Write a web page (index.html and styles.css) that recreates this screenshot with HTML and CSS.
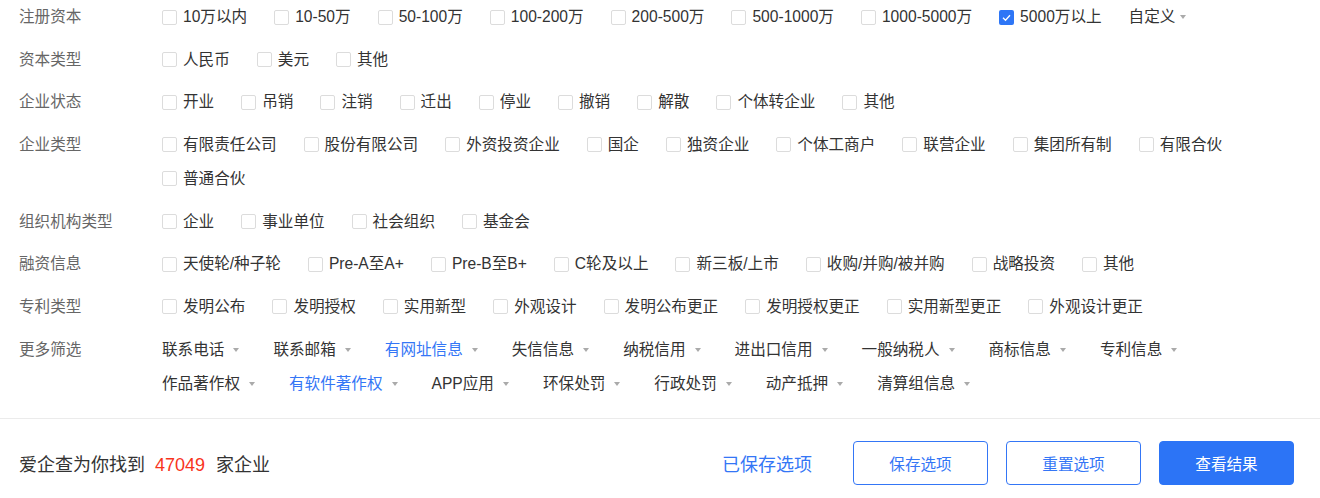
FILE: index.html
```html
<!DOCTYPE html>
<html lang="zh-CN">
<head>
    <meta charset="UTF-8">
    <meta name="viewport" content="width=device-width, initial-scale=1.0">
    <title>高级筛选</title>
    <link rel="stylesheet" href="styles.css">
</head>
<body>

    <div class="filter-panel">
        <div class="filter-row">
            <div class="filter-label">注册资本</div>
            <div class="filter-options">
                <label class="option"><span class="checkbox"></span>10万以内</label>
                <label class="option"><span class="checkbox"></span>10-50万</label>
                <label class="option"><span class="checkbox"></span>50-100万</label>
                <label class="option"><span class="checkbox"></span>100-200万</label>
                <label class="option"><span class="checkbox"></span>200-500万</label>
                <label class="option"><span class="checkbox"></span>500-1000万</label>
                <label class="option"><span class="checkbox"></span>1000-5000万</label>
                <label class="option"><span class="checkbox checked"><svg viewBox="0 0 15 15" width="15" height="15"><polyline points="4,7.8 6.5,10.2 11,5.2" fill="none" stroke="#fff" stroke-width="1.3"/></svg></span>5000万以上</label>
                <span class="custom">自定义<span class="caret"></span></span>
            </div>
        </div>

        <div class="filter-row">
            <div class="filter-label">资本类型</div>
            <div class="filter-options">
                <label class="option"><span class="checkbox"></span>人民币</label>
                <label class="option"><span class="checkbox"></span>美元</label>
                <label class="option"><span class="checkbox"></span>其他</label>
            </div>
        </div>

        <div class="filter-row">
            <div class="filter-label">企业状态</div>
            <div class="filter-options">
                <label class="option"><span class="checkbox"></span>开业</label>
                <label class="option"><span class="checkbox"></span>吊销</label>
                <label class="option"><span class="checkbox"></span>注销</label>
                <label class="option"><span class="checkbox"></span>迁出</label>
                <label class="option"><span class="checkbox"></span>停业</label>
                <label class="option"><span class="checkbox"></span>撤销</label>
                <label class="option"><span class="checkbox"></span>解散</label>
                <label class="option"><span class="checkbox"></span>个体转企业</label>
                <label class="option"><span class="checkbox"></span>其他</label>
            </div>
        </div>

        <div class="filter-row">
            <div class="filter-label">企业类型</div>
            <div class="filter-options">
                <label class="option"><span class="checkbox"></span>有限责任公司</label>
                <label class="option"><span class="checkbox"></span>股份有限公司</label>
                <label class="option"><span class="checkbox"></span>外资投资企业</label>
                <label class="option"><span class="checkbox"></span>国企</label>
                <label class="option"><span class="checkbox"></span>独资企业</label>
                <label class="option"><span class="checkbox"></span>个体工商户</label>
                <label class="option"><span class="checkbox"></span>联营企业</label>
                <label class="option"><span class="checkbox"></span>集团所有制</label>
                <label class="option"><span class="checkbox"></span>有限合伙</label>
                <label class="option"><span class="checkbox"></span>普通合伙</label>
            </div>
        </div>

        <div class="filter-row">
            <div class="filter-label">组织机构类型</div>
            <div class="filter-options">
                <label class="option"><span class="checkbox"></span>企业</label>
                <label class="option"><span class="checkbox"></span>事业单位</label>
                <label class="option"><span class="checkbox"></span>社会组织</label>
                <label class="option"><span class="checkbox"></span>基金会</label>
            </div>
        </div>

        <div class="filter-row">
            <div class="filter-label">融资信息</div>
            <div class="filter-options">
                <label class="option"><span class="checkbox"></span>天使轮/种子轮</label>
                <label class="option"><span class="checkbox"></span>Pre-A至A+</label>
                <label class="option"><span class="checkbox"></span>Pre-B至B+</label>
                <label class="option"><span class="checkbox"></span>C轮及以上</label>
                <label class="option"><span class="checkbox"></span>新三板/上市</label>
                <label class="option"><span class="checkbox"></span>收购/并购/被并购</label>
                <label class="option"><span class="checkbox"></span>战略投资</label>
                <label class="option"><span class="checkbox"></span>其他</label>
            </div>
        </div>

        <div class="filter-row">
            <div class="filter-label">专利类型</div>
            <div class="filter-options">
                <label class="option"><span class="checkbox"></span>发明公布</label>
                <label class="option"><span class="checkbox"></span>发明授权</label>
                <label class="option"><span class="checkbox"></span>实用新型</label>
                <label class="option"><span class="checkbox"></span>外观设计</label>
                <label class="option"><span class="checkbox"></span>发明公布更正</label>
                <label class="option"><span class="checkbox"></span>发明授权更正</label>
                <label class="option"><span class="checkbox"></span>实用新型更正</label>
                <label class="option"><span class="checkbox"></span>外观设计更正</label>
            </div>
        </div>

        <div class="filter-row">
            <div class="filter-label">更多筛选</div>
            <div class="filter-options">
                <span class="more-item">联系电话<span class="caret"></span></span>
                <span class="more-item">联系邮箱<span class="caret"></span></span>
                <span class="more-item active">有网址信息<span class="caret"></span></span>
                <span class="more-item">失信信息<span class="caret"></span></span>
                <span class="more-item">纳税信用<span class="caret"></span></span>
                <span class="more-item">进出口信用<span class="caret"></span></span>
                <span class="more-item">一般纳税人<span class="caret"></span></span>
                <span class="more-item">商标信息<span class="caret"></span></span>
                <span class="more-item">专利信息<span class="caret"></span></span>
                <span class="more-item">作品著作权<span class="caret"></span></span>
                <span class="more-item active">有软件著作权<span class="caret"></span></span>
                <span class="more-item">APP应用<span class="caret"></span></span>
                <span class="more-item">环保处罚<span class="caret"></span></span>
                <span class="more-item">行政处罚<span class="caret"></span></span>
                <span class="more-item">动产抵押<span class="caret"></span></span>
                <span class="more-item">清算组信息<span class="caret"></span></span>
            </div>
        </div>
    </div>

    <div class="footer">
        <div class="result">爱企查为你找到<span class="count">47049</span>家企业</div>
        <div class="actions">
            <a class="saved-link">已保存选项</a>
            <button class="btn btn-outline">保存选项</button>
            <button class="btn btn-outline">重置选项</button>
            <button class="btn btn-primary">查看结果</button>
        </div>
    </div>

</body>
</html>
```
FILE: styles.css
```css
body {
    margin: 0;
    background-color: #fff;
    font-family: "Liberation Sans", "Noto Sans CJK SC", sans-serif;
    color: #333;
}

.filter-panel {
    padding: 0 26px 17px 19px;
    border-bottom: 1px solid #ebebeb;
}

.filter-row {
    display: flex;
    margin-bottom: 8.67px;
}

.filter-row:last-child {
    margin-bottom: 0;
}

.filter-label {
    width: 143px;
    flex-shrink: 0;
    line-height: 34px;
    font-size: 15.6px;
    color: #666;
}

.filter-options {
    flex: 1;
    display: flex;
    flex-wrap: wrap;
}

.option {
    display: flex;
    align-items: center;
    height: 34px;
    line-height: 34px;
    margin-right: 27px;
    font-size: 15.6px;
    color: #333;
    white-space: nowrap;
}

.checkbox {
    width: 15px;
    height: 15px;
    box-sizing: border-box;
    border: 1px solid #dcdcdc;
    border-radius: 2px;
    margin-right: 6px;
    background-color: #fff;
}

.checkbox.checked {
    border: none;
    background-color: #2e76f6;
}

.checkbox svg {
    display: block;
}

.custom {
    display: flex;
    align-items: center;
    height: 34px;
    line-height: 34px;
    font-size: 15.6px;
    color: #333;
}

.custom .caret {
    margin-left: 5px;
}

.caret {
    display: inline-block;
    width: 0;
    height: 0;
    border-left: 3.5px solid transparent;
    border-right: 3.5px solid transparent;
    border-top: 4px solid #aaa;
    margin-left: 9px;
}

.more-item {
    display: flex;
    align-items: center;
    height: 34px;
    line-height: 34px;
    margin-right: 34px;
    font-size: 15.6px;
    color: #333;
    white-space: nowrap;
}

.more-item.active {
    color: #3476f6;
}

.footer {
    display: flex;
    justify-content: space-between;
    align-items: center;
    padding: 22px 26px 0 19px;
}

.result {
    font-size: 18px;
    color: #333;
}

.count {
    color: #f8341c;
    margin: 0 11px 0 10px;
}

.actions {
    display: flex;
    align-items: center;
}

.saved-link {
    font-size: 18px;
    color: #3476f6;
    margin-right: 41px;
    cursor: pointer;
}

.btn {
    width: 135px;
    height: 44px;
    border-radius: 4px;
    font-family: inherit;
    font-size: 15.6px;
    cursor: pointer;
    margin-left: 18px;
}

.saved-link + .btn {
    margin-left: 0;
}

.btn-outline {
    background-color: #fff;
    border: 1px solid #3476f6;
    color: #3476f6;
}

.btn-primary {
    background-color: #2c74f6;
    border: 1px solid #2c74f6;
    color: #fff;
}
```
